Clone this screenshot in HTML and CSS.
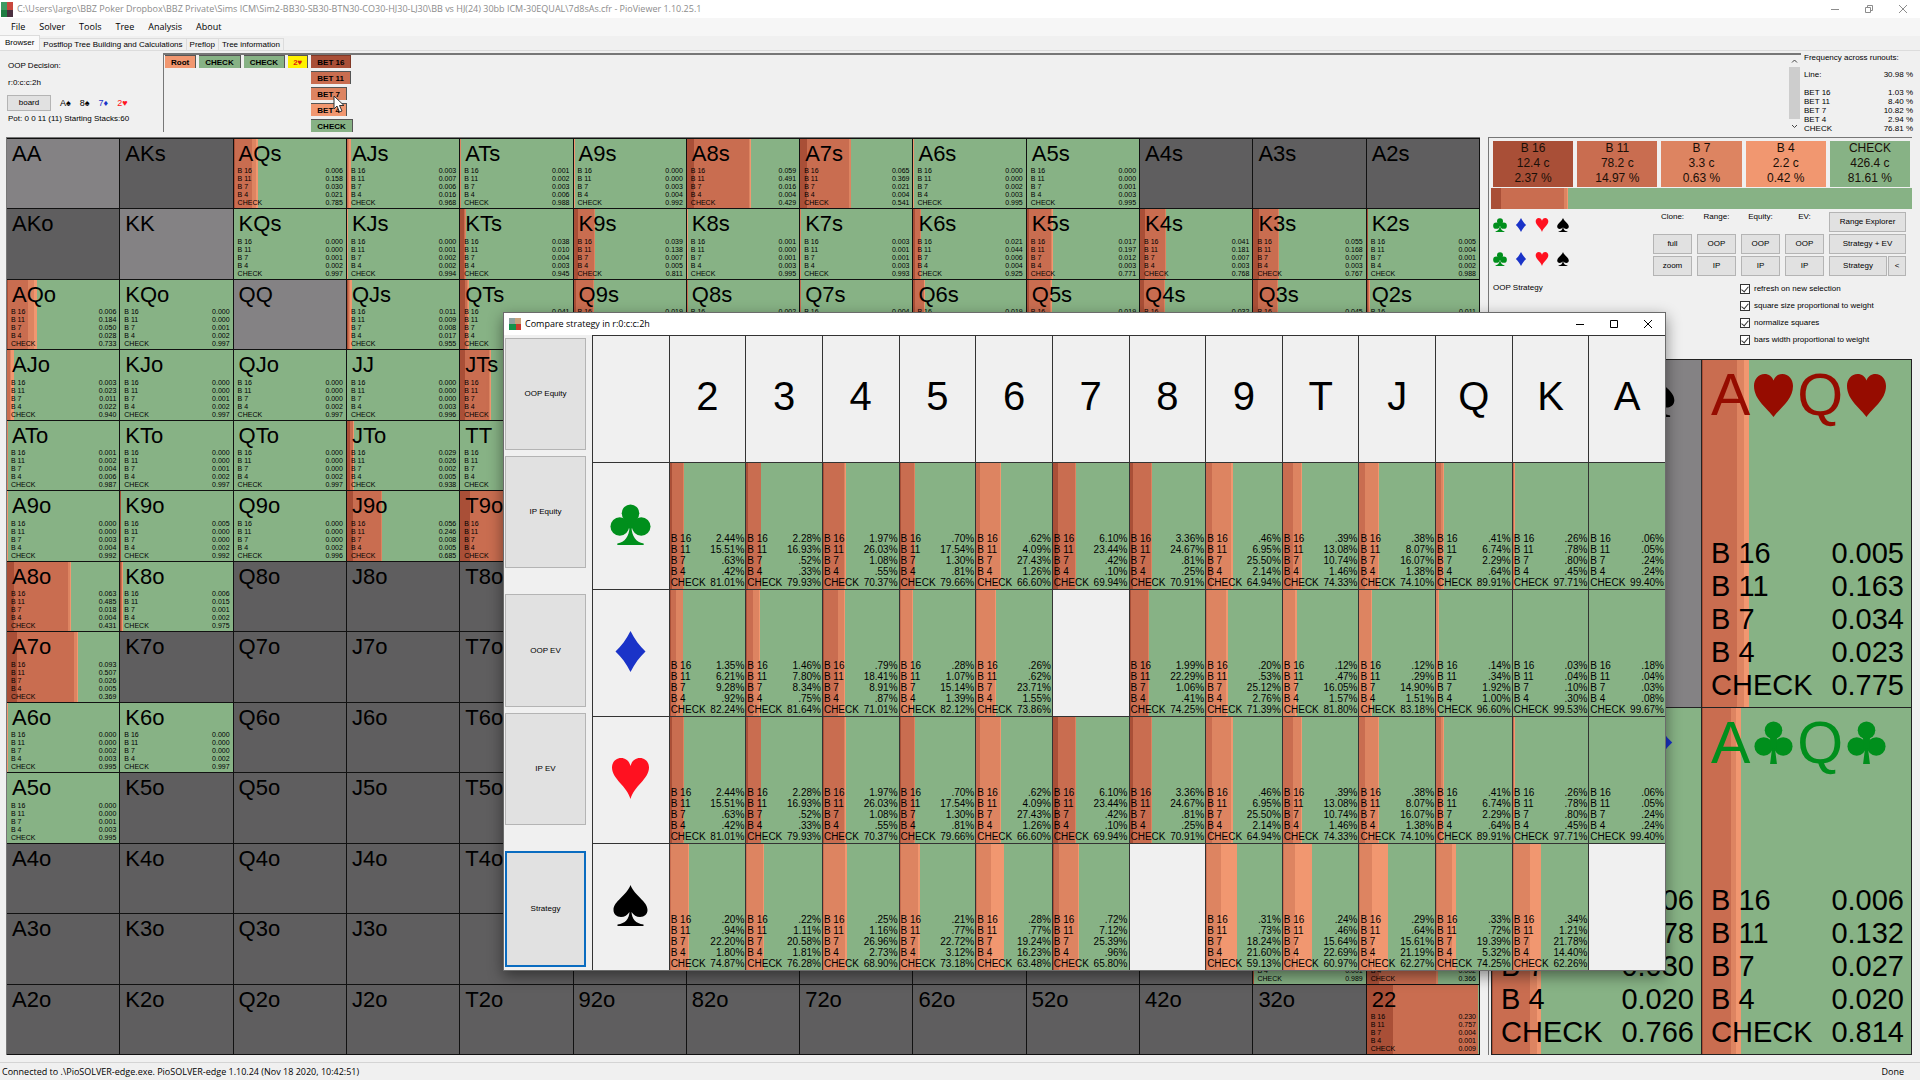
FILE: index.html
```html
<!DOCTYPE html>
<html lang="en">
<head>
<meta charset="utf-8">
<title>PioViewer 1.10.25.1</title>
<link rel="stylesheet" href="styles.css">
</head>
<body>
<svg class="sprite" aria-hidden="true">
  <symbol id="club" viewBox="0 0 41 42"><circle cx="20.500" cy="9.500" r="9"/><circle cx="9.500" cy="23" r="9.500"/><circle cx="31.500" cy="23" r="9.500"/><path d="M15 14h11l-3 7h-5zM17 19h7v6h-7zM19.500 24h2C22 33 26 39 34 40.500V42H7v-1.500C15 39 19 33 19.500 24z"/></symbol>
  <symbol id="club-slim" viewBox="0 0 39 44"><circle cx="19.500" cy="9.500" r="9"/><circle cx="9.500" cy="26" r="9.500"/><circle cx="29.500" cy="26" r="9.500"/><path d="M16 16h7v12h-7zM18.500 24h2l2.500 20h-7z"/></symbol>
  <symbol id="diamond" viewBox="0 0 30 41"><path d="M15 0C19 8 24 15 30 20.500 24 26 19 33 15 41 11 33 6 26 0 20.500 6 15 11 8 15 0z"/></symbol>
  <symbol id="heart" viewBox="0 0 37 41"><path d="M18.500 41C15 28 0 21 0 9.500 0 4 4 0 9 0c5 0 8.500 3.500 9.500 8C19.500 3.500 23 0 28 0c5 0 9 4 9 9.500C37 21 22 28 18.500 41z"/></symbol>
  <symbol id="heart-full" viewBox="0 0 39 43"><path d="M19.500 43C14 35 0 26 0 12 0 5 4.500 0 10.500 0c4.500 0 7.500 2.500 9 6.500C21 2.500 24 0 28.500 0 34.500 0 39 5 39 12c0 14-14 23-19.500 31z"/></symbol>
  <symbol id="spade" viewBox="0 0 34 41"><path d="M17 0c4 11 17 16 17 25 0 4-3 7-7.500 7-3.500 0-6.500-2-8.500-5 .5 7 4 11.500 12 12.500V41H4v-1.500C12 38.500 15.500 34 16 27c-2 3-5 5-8.500 5C3 32 0 29 0 25 0 16 13 11 17 0z"/></symbol>
  <symbol id="min" viewBox="0 0 10 10"><path d="M1 5.500h8" fill="none" stroke="currentColor"/></symbol>
  <symbol id="max" viewBox="0 0 10 10"><path d="M1.500 1.500h7v7h-7z" fill="none" stroke="currentColor"/></symbol>
  <symbol id="restore" viewBox="0 0 10 10"><path d="M1.500 3.500h5v5h-5zM3.500 3V1.500h5v5H7" fill="none" stroke="currentColor"/></symbol>
  <symbol id="close" viewBox="0 0 10 10"><path d="M1 1l8 8M9 1l-8 8" fill="none" stroke="currentColor"/></symbol>
</svg>

<div class="app">
  <header class="titlebar">
    <svg class="logo" viewBox="0 0 12 15"><path fill="#3f9a62" d="M0 0h6v8H0z"/><path fill="#c8473c" d="M6 0h6v8H6z"/><path fill="#1f7d43" d="M0 8h6v7H0z"/><path fill="#4b3040" d="M6 8h6v7H6z"/></svg>
    <h1 class="title">C:\Users\Jargo\BBZ Poker Dropbox\BBZ Private\Sims ICM\Sim2-BB30-SB30-BTN30-CO30-HJ30-LJ30\BB vs HJ(24) 30bb ICM-30EQUAL\7d8sAs.cfr - PioViewer 1.10.25.1</h1>
    <div class="wincontrols">
      <button aria-label="Minimize"><svg><use href="#min"/></svg></button>
      <button aria-label="Restore"><svg><use href="#restore"/></svg></button>
      <button aria-label="Close"><svg><use href="#close"/></svg></button>
    </div>
  </header>
  <nav class="menubar">
    <button>File</button><button>Solver</button><button>Tools</button><button>Tree</button><button>Analysis</button><button>About</button>
  </nav>
  <div class="tabs" role="tablist">
    <button class="tab active" role="tab" aria-selected="true">Browser</button><button class="tab" role="tab">Postflop Tree Building and Calculations</button><button class="tab" role="tab">Preflop</button><button class="tab" role="tab">Tree information</button>
  </div>

  <section class="top">
    <div class="info">
      <p>OOP Decision:</p>
      <p>r:0:c:c:2h</p>
      <div class="board"><button class="btn">board</button><span>A♠</span><span>8♠</span><span class="blue">7♦</span><span class="red">2♥</span></div>
      <p class="pot">Pot: 0 0 11 (11) Starting Stacks:60</p>
    </div>
    <div class="tree">
      <button class="node b4">Root</button>
      <button class="node check">CHECK</button>
      <button class="node check">CHECK</button>
      <button class="node card">2♥</button>
      <div class="choices">
        <button class="node b16">BET 16</button>
        <button class="node b11">BET 11</button>
        <button class="node b7">BET 7</button>
        <button class="node b4">BET 4</button>
        <button class="node check">CHECK</button>
        <svg class="cursor" viewBox="0 0 12 18"><path d="M1 1v13l3-3 2.500 6 2.500-1-2.500-5.500H11z" fill="#fff" stroke="#333"/></svg>
      </div>
    </div>
    <div class="scroll">
      <svg viewBox="0 0 11 8"><path d="M3 5.500L5.500 3 8 5.500" fill="none" stroke="#444"/></svg>
      <div class="thumb"></div>
      <svg viewBox="0 0 11 8"><path d="M3 3l2.500 2.500L8 3" fill="none" stroke="#444"/></svg>
    </div>
    <div class="freq">
      <p>Frequency across runouts:</p>
      <table>
        <tr class="line"><th>Line:</th><td>30.98 %</td></tr>
        <tr><th>BET 16</th><td>1.03 %</td></tr>
        <tr><th>BET 11</th><td>8.40 %</td></tr>
        <tr><th>BET 7</th><td>10.82 %</td></tr>
        <tr><th>BET 4</th><td>2.94 %</td></tr>
        <tr><th>CHECK</th><td>76.81 %</td></tr>
      </table>
    </div>
  </section>

  <main class="main">
    <div class="range"><table class="matrix"><tbody id="matrix"></tbody></table></div>
    <aside class="side">
      <div class="actions">
        <div class="b16">B 16<br>12.4 c<br>2.37 %</div>
        <div class="b11">B 11<br>78.2 c<br>14.97 %</div>
        <div class="b7">B 7<br>3.3 c<br>0.63 %</div>
        <div class="b4">B 4<br>2.2 c<br>0.42 %</div>
        <div class="check">CHECK<br>426.4 c<br>81.61 %</div>
      </div>
      <div class="total bars" style="--a:2.37%;--b:17.34%;--c:17.97%;--d:18.39%"></div>
      <div class="controls">
        <div class="filters">
          <div class="suits"><svg class="green"><use href="#club"/></svg><svg class="blue"><use href="#diamond"/></svg><svg class="red"><use href="#heart"/></svg><svg><use href="#spade"/></svg></div>
          <div class="suits"><svg class="green"><use href="#club"/></svg><svg class="blue"><use href="#diamond"/></svg><svg class="red"><use href="#heart"/></svg><svg><use href="#spade"/></svg></div>
          <p>OOP Strategy</p>
        </div>
        <div class="tools">
          <div class="toolgrid">
            <span>Clone:</span><span>Range:</span><span>Equity:</span><span>EV:</span><button class="btn">Range Explorer</button>
            <button class="btn">full</button><button class="btn">OOP</button><button class="btn">OOP</button><button class="btn">OOP</button><button class="btn">Strategy + EV</button>
            <button class="btn">zoom</button><button class="btn">IP</button><button class="btn">IP</button><button class="btn">IP</button>
            <div class="pair"><button class="btn">Strategy</button><button class="btn">&lt;</button></div>
          </div>
          <div class="checks">
            <label><input type="checkbox" checked>refresh on new selection</label>
            <label><input type="checkbox" checked>square size proportional to weight</label>
            <label><input type="checkbox" checked>normalize squares</label>
            <label><input type="checkbox" checked>bars width proportional to weight</label>
          </div>
        </div>
      </div>
      <div class="combos" id="combos"></div>
    </aside>
  </main>

  <footer class="status"><span>Connected to .\PioSOLVER-edge.exe. PioSOLVER-edge 1.10.24 (Nov 18 2020, 10:42:51)</span><span>Done</span></footer>

  <section class="dialog" role="dialog" aria-label="Compare strategy">
    <header class="dialogbar">
      <svg class="logo" viewBox="0 0 12 12"><path fill="#8fa3a0" d="M0 0h6v6H0z"/><path fill="#c9a27c" d="M6 0h6v6H6z"/><path fill="#12924a" d="M0 6h7v6H0z"/><path fill="#c93a2c" d="M7 6h5v6H7z"/></svg>
      <h2 class="title">Compare strategy in r:0:c:c:2h</h2>
      <div class="wincontrols">
        <button aria-label="Minimize"><svg><use href="#min"/></svg></button>
        <button aria-label="Maximize"><svg><use href="#max"/></svg></button>
        <button aria-label="Close"><svg><use href="#close"/></svg></button>
      </div>
    </header>
    <div class="dialogbody">
      <div class="modes">
        <div><button class="btn">OOP Equity</button><button class="btn">IP Equity</button></div>
        <div><button class="btn">OOP EV</button><button class="btn">IP EV</button></div>
        <div><button class="btn focused">Strategy</button></div>
      </div>
      <table class="compare"><tbody id="compare"></tbody></table>
    </div>
  </section>
</div>
<script src="script.js"></script>
</body>
</html>
```
FILE: styles.css
```css
:root {
  --b16: #a94f37;
  --b11: #c96d50;
  --b7: #dd8461;
  --b4: #f19770;
  --check: #87b285;
  --face: #f0f0f0;
  --sans: "Liberation Sans", Arial, sans-serif;
  --ui: "Open Sans", "Noto Sans", sans-serif;
}
* { box-sizing: border-box; }
body { margin: 0; background: var(--face); color: #000; font: 8px/10px var(--sans); }
p, h1, h2 { margin: 0; font-weight: normal; }
button { font: inherit; color: inherit; border: 0; background: none; padding: 0; margin: 0; }
table { border-spacing: 0; }
th, td { padding: 0; font-weight: normal; text-align: left; }
svg { display: block; fill: currentColor; }
.sprite { position: absolute; width: 0; height: 0; }
.green { color: #008f1c; }
.blue { color: #1a33c8; }
.red { color: #ff1120; }
.b16 { background: var(--b16); }
.b11 { background: var(--b11); }
.b7 { background: var(--b7); }
.b4 { background: var(--b4); }
.check { background: var(--check); }
.bars {
  background: linear-gradient(to right,
    var(--b16) var(--a), var(--b11) var(--a) var(--b), var(--b7) var(--b) var(--c),
    var(--b4) var(--c) var(--d), var(--check) var(--d));
}
.btn { background: #e1e1e1; border: 1px solid #b4b4b4; text-align: center; white-space: nowrap; }

.app { position: relative; min-height: 100vh; display: flex; flex-direction: column; }
.titlebar { display: flex; align-items: center; gap: 4px; height: 18px; padding-left: 1px; background: #fff; color: #8c8c8c; }
.titlebar .logo { width: 12px; height: 15px; }
.title { flex: 1; font: 9px/12px var(--ui); white-space: nowrap; }
.wincontrols { display: flex; }
.wincontrols button { width: 34px; height: 16px; display: grid; place-items: center; }
.wincontrols svg { width: 10px; height: 10px; }
.menubar { display: flex; gap: 14px; height: 18px; padding-left: 11px; background: #f6f6f6; font: 9px/16px var(--ui); }
.tabs { display: flex; align-items: flex-end; height: 15px; border-bottom: 1px solid #dcdcdc; }
.tab { height: 12px; padding: 0 3px; border: 1px solid #dcdcdc; border-width: 1px 1px 0 0; }
.tab.active { height: 15px; padding: 0 5px; background: #fafafa; }

.top { display: flex; height: 84px; padding: 2px 7px 3px 8px; }
.info { width: 155px; padding-top: 8px; display: flex; flex-direction: column; gap: 7px; }
.board { display: flex; align-items: center; gap: 9px; font: 9px/10px var(--sans); margin-left: -1px; }
.board .btn { width: 44px; height: 16px; font-size: 8px; }
.pot { margin-top: -4px; }
.tree { flex: 1; display: flex; align-items: flex-start; gap: 3px; padding: 0 1px; border: solid #777; border-width: 2px 0 0 1px; }
.node { height: 13px; padding: 0 6px; border: solid #555; border-width: 1px 1px 0 0; font-weight: bold; line-height: 11px; white-space: nowrap; }
.node.card { padding: 0 5px; background: #fff200; color: #e01a10; }
.node.b16 { border-color: #803826; }
.choices { position: relative; display: flex; flex-direction: column; align-items: flex-start; gap: 3px; }
.cursor { position: absolute; left: 22px; top: 40px; width: 12px; height: 18px; }
.scroll { display: flex; flex-direction: column; width: 12px; border-top: 2px solid #777; padding-right: 1px; }
.scroll svg { width: 11px; height: 12px; }
.scroll .thumb { flex: 1; margin-bottom: 1px; background: #cdcdcd; }
.freq { width: 112px; padding-left: 3px; }
.freq p { white-space: nowrap; }
.freq table { width: 100%; line-height: 9px; }
.freq td { text-align: right; }
.freq .line th, .freq .line td { padding: 7px 0 9px; }

.main { flex: 1; display: grid; grid-template-columns: 1474fr 424fr; gap: 8px; padding: 2px 8px 7px 6px; }
.range { display: flex; border: solid #777; border-width: 1px 0 0 1px; }
.matrix { flex: 1; display: grid; grid-template-columns: repeat(13, minmax(0, 1fr)); grid-auto-rows: minmax(0, 1fr); gap: 1px; padding: 1px 1px 1px 0; background: #111; }
.matrix tbody, .matrix tr, .compare tbody, .compare tr { display: contents; }
.hand { display: flex; flex-direction: column; justify-content: space-between; overflow: hidden; padding: 4px 3px 1px 4px; font: 22px/22px var(--sans); text-indent: 1px; }
.hand.off { background: #5f5e5f; }
.hand.pair { background: #848284; }
.stats { display: flex; justify-content: space-between; white-space: pre; text-indent: 0; }
.stats span:last-child { text-align: right; }
.hand .stats { min-height: 40px; margin-top: auto; font-size: 7px; line-height: 8px; }
.hand .stats.tail { align-items: flex-end; }

.side { display: flex; flex-direction: column; border: solid #777; border-width: 1px 0 0 1px; padding-left: 2px; }
.actions { display: grid; grid-template-columns: repeat(5, 1fr); gap: 4px; padding: 3px 2px 1px; font: 12px/15px var(--sans); text-align: center; color: #1a0f08; }
.actions div { padding-bottom: 1px; }
.total { height: 21px; }
.controls { display: flex; justify-content: space-between; height: 150px; padding: 3px 6px 0 2px; }
.filters { padding-top: 6px; }
.suits { display: flex; gap: 7px; margin-bottom: 20px; }
.suits svg { width: 14px; height: 14px; }
.filters p { margin-top: -3px; }
.tools { display: flex; flex-direction: column; align-items: flex-end; gap: 4px; }
.toolgrid { display: grid; grid-template-columns: repeat(4, 39px) 77px; grid-auto-rows: 20px; gap: 2px 5px; }
.toolgrid > span { text-align: center; }
.toolgrid .pair { display: grid; grid-template-columns: 1fr 18px; gap: 1px; }
.checks { width: 166px; }
.checks label { display: flex; align-items: center; gap: 4px; line-height: 17px; }
.checks input { appearance: none; width: 10px; height: 10px; margin: 0; border: 1px solid #333; background: #fff; display: grid; place-items: center; }
.checks input:checked::before { content: ""; width: 3px; height: 6px; border: solid #333; border-width: 0 1px 1px 0; transform: rotate(40deg); }
.combos { flex: 1; display: grid; grid-template-columns: 1fr 1fr; grid-template-rows: 1fr 1fr; gap: 1px; padding: 1px; background: #222; }
.combo { display: flex; flex-direction: column; justify-content: space-between; padding: 5px 7px 5px 9px; }
.combo.pair { background: #848284; }
.combo h2 { display: flex; align-items: center; gap: 4px; font: 59px/60px var(--sans); }
.combo h2 svg { width: 39px; height: 43px; }
.combo .stats { font-size: 29px; line-height: 33px; }
.combo .red { color: #960c00; }

.status { display: flex; justify-content: space-between; height: 18px; padding: 2px 16px 0 2px; border-top: 1px solid #d4d4d4; font: 9px/14px var(--ui); }

.dialog { position: absolute; left: 503px; top: 312px; width: 1163px; height: 659px; display: flex; flex-direction: column; border: 1px solid #6b6b6b; background: var(--face); box-shadow: 0 5px 14px rgba(0, 0, 0, .45); }
.dialogbar { display: flex; align-items: center; gap: 4px; height: 22px; padding-left: 5px; background: #fff; }
.dialogbar .logo { width: 12px; height: 12px; }
.dialogbody { flex: 1; display: flex; gap: 6px; }
.modes { display: flex; flex-direction: column; gap: 26px; width: 82px; padding: 3px 0 3px 1px; }
.modes div { flex: 230; display: flex; flex-direction: column; gap: 6px; }
.modes div:last-child { flex: 116; }
.modes .btn { flex: 1; }
.modes .focused { border: 2px solid #0a6cc0; }
.compare { flex: 1; display: grid; grid-template-columns: repeat(14, minmax(0, 1fr)); grid-template-rows: repeat(5, minmax(0, 1fr)); gap: 1px; padding: 1px 0 0 1px; background: #333; }
.compare th, .compare td { background-color: var(--face); }
.compare th { display: grid; place-items: center; }
.compare .rank { padding-bottom: 6px; font: 40px/44px var(--sans); }
.compare .suit { padding-bottom: 4px; }
.compare .suit svg { width: 41px; height: 41px; }
.compare td { display: flex; flex-direction: column; justify-content: flex-end; padding: 0 1px 1px; font: 10px/11px var(--sans); }
```
FILE: script.js
```js
const RANKS = "AKQJT98765432";
const ACTIONS = ["B 16", "B 11", "B 7", "B 4", "CHECK"];

// Frequencies per hand in thousandths: B 16, B 11, B 7, B 4, CHECK
const HANDS = {
  AQs: [6, 158, 30, 21, 785], AJs: [3, 7, 6, 16, 968], ATs: [1, 2, 3, 6, 988],
  A9s: [0, 0, 3, 4, 992], A8s: [59, 491, 16, 4, 429], A7s: [65, 369, 21, 4, 541],
  A6s: [0, 0, 2, 3, 995], A5s: [0, 0, 1, 3, 995],
  KQs: [0, 0, 1, 2, 997], KJs: [0, 1, 2, 2, 994], KTs: [38, 10, 4, 3, 945],
  K9s: [39, 138, 7, 5, 811], K8s: [1, 0, 1, 3, 995], K7s: [3, 1, 1, 3, 993],
  K6s: [21, 44, 6, 4, 925], K5s: [17, 197, 12, 3, 771], K4s: [41, 181, 7, 3, 768],
  K3s: [55, 168, 7, 3, 767], K2s: [5, 4, 1, 2, 988],
  AQo: [6, 184, 50, 28, 733], KQo: [0, 0, 1, 2, 997], QJs: [11, 9, 8, 17, 955],
  QTs: [41, 20, 10, 10, 919], Q9s: [19, 150, 8, 5, 818], Q8s: [2, 3, 2, 3, 990],
  Q7s: [4, 3, 2, 3, 988], Q6s: [19, 74, 6, 4, 897], Q5s: [19, 190, 8, 3, 780],
  Q4s: [32, 180, 7, 3, 778], Q3s: [45, 170, 7, 3, 775], Q2s: [11, 10, 1, 2, 976],
  AJo: [3, 23, 11, 22, 940], KJo: [0, 0, 1, 2, 997], QJo: [0, 0, 0, 2, 997],
  JJ: [0, 0, 0, 3, 996], JTs: [40, 220, 5, 5, 730],
  ATo: [1, 2, 4, 6, 987], KTo: [0, 0, 1, 2, 997], QTo: [0, 0, 0, 2, 997],
  JTo: [29, 26, 2, 5, 938], TT: [0, 0, 1, 3, 996],
  A9o: [0, 0, 3, 4, 992], K9o: [5, 0, 0, 2, 992], Q9o: [0, 0, 0, 2, 996],
  J9o: [56, 246, 8, 5, 685], T9o: [90, 400, 5, 5, 500],
  A8o: [63, 485, 18, 4, 431], K8o: [6, 15, 1, 2, 975],
  A7o: [93, 507, 26, 5, 369], A6o: [0, 0, 2, 3, 995], K6o: [0, 0, 0, 2, 997],
  A5o: [0, 0, 1, 3, 995],
  33: [5, 3, 2, 1, 989], "32s": [110, 510, 12, 2, 366], 22: [230, 757, 4, 1, 9]
};

// Percentages per turn card, 2 to A; null where the card is already on the board
const RED_CLUB = [
  [2.44, 15.51, .63, .42, 81.01], [2.28, 16.93, .52, .33, 79.93], [1.97, 26.03, 1.08, .55, 70.37],
  [.70, 17.54, 1.30, .81, 79.66], [.62, 4.09, 27.43, 1.26, 66.60], [6.10, 23.44, .42, .10, 69.94],
  [3.36, 24.67, .81, .25, 70.91], [.46, 6.95, 25.50, 2.14, 64.94], [.39, 13.08, 10.74, 1.46, 74.33],
  [.38, 8.07, 16.07, 1.38, 74.10], [.41, 6.74, 2.29, .64, 89.91], [.26, .78, .80, .45, 97.71],
  [.06, .05, .24, .24, 99.40]
];
const TURNS = [
  ["club", "green", RED_CLUB],
  ["diamond", "blue", [
    [1.35, 6.21, 9.28, .92, 82.24], [1.46, 7.80, 8.34, .75, 81.64], [.79, 18.41, 8.91, .87, 71.01],
    [.28, 1.07, 15.14, 1.39, 82.12], [.26, .62, 23.71, 1.55, 73.86], null,
    [1.99, 22.29, 1.06, .41, 74.25], [.20, .53, 25.12, 2.76, 71.39], [.12, .47, 16.05, 1.57, 81.80],
    [.12, .29, 14.90, 1.51, 83.18], [.14, .34, 1.92, 1.00, 96.60], [.03, .04, .10, .30, 99.53],
    [.18, .04, .03, .08, 99.67]
  ]],
  ["heart", "red", RED_CLUB],
  ["spade", "", [
    [.20, .94, 22.20, 1.80, 74.87], [.22, 1.11, 20.58, 1.81, 76.28], [.25, 1.16, 26.96, 2.73, 68.90],
    [.21, .77, 22.72, 3.12, 73.18], [.28, .77, 19.24, 16.23, 63.48], [.72, 7.12, 25.39, .96, 65.80],
    null, [.31, .73, 18.24, 21.60, 59.13], [.24, .46, 15.64, 22.69, 60.97],
    [.29, .64, 15.61, 21.19, 62.27], [.33, .72, 19.39, 5.32, 74.25], [.34, 1.21, 21.78, 14.40, 62.26],
    null
  ]]
];

const COMBOS = [
  ["spade", "", null],
  ["heart-full", "red", [5, 163, 34, 23, 775]],
  ["diamond", "blue", [6, 178, 30, 20, 766]],
  ["club-slim", "green", [6, 132, 27, 20, 814]]
];

// Cumulative stops for the stacked bar behind a cell
function stops(values, total) {
  let sum = 0;
  return ["a", "b", "c", "d"].map((name, i) => {
    sum += values[i];
    return `--${name}:${(sum / total * 100).toFixed(2)}%`;
  }).join(";");
}
const block = (labels, values, extra = "") =>
  `<div class="stats${extra}"><span>${labels.join("\n")}</span><span>${values.join("\n")}</span></div>`;
const decimals = v => v.map(n => (n / 1000).toFixed(3));
const percents = v => v.map(n => n.toFixed(2).replace(/^0/, "") + "%");

// The open dialog lies over rows Q to 3 from column T on: text below it is not drawn
function handText(name, i, j, v) {
  const numbers = v ? decimals(v) : [];
  if (i > 2 && i < 11 && j > 4) return "";
  if (i === 11 && j > 3) return v ? block(ACTIONS.slice(3), numbers.slice(3), " tail") : "";
  if (!v) return name;
  if (i === 2 && j > 4) return name + block(ACTIONS.slice(0, 1), numbers.slice(0, 1));
  if (j === 4 && i > 1) return name + block(ACTIONS, i === 2 ? numbers.slice(0, 1) : []);
  return name + block(ACTIONS, numbers);
}

document.getElementById("matrix").innerHTML = [...RANKS].map((r, i) =>
  "<tr>" + [...RANKS].map((c, j) => {
    const name = i === j ? r + r : i < j ? r + c + "s" : c + r + "o";
    const v = HANDS[name];
    const text = handText(name, i, j, v);
    return v
      ? `<td class="hand bars" style="${stops(v, 1000)}">${text}</td>`
      : `<td class="hand ${i === j ? "pair" : "off"}">${text}</td>`;
  }).join("") + "</tr>").join("");

document.getElementById("compare").innerHTML =
  "<tr><td></td>" + [...RANKS].reverse().map(r => `<th class="rank">${r}</th>`).join("") + "</tr>" +
  TURNS.map(([suit, color, cells]) =>
    `<tr><th class="suit ${color}" aria-label="${suit}"><svg><use href="#${suit}"/></svg></th>` +
    cells.map(v => v
      ? `<td class="bars" style="${stops(v, 100)}">${block(ACTIONS, percents(v))}</td>`
      : "<td></td>").join("") + "</tr>").join("");

document.getElementById("combos").innerHTML = COMBOS.map(([suit, color, v]) => {
  const icon = `<svg><use href="#${suit}"/></svg>`;
  return `<div class="combo ${v ? "bars" : "pair"}"${v ? ` style="${stops(v, 1000)}"` : ""}>` +
    `<h2 class="${color}">A${icon}Q${icon}</h2>${v ? block(ACTIONS, decimals(v)) : ""}</div>`;
}).join("");
```
